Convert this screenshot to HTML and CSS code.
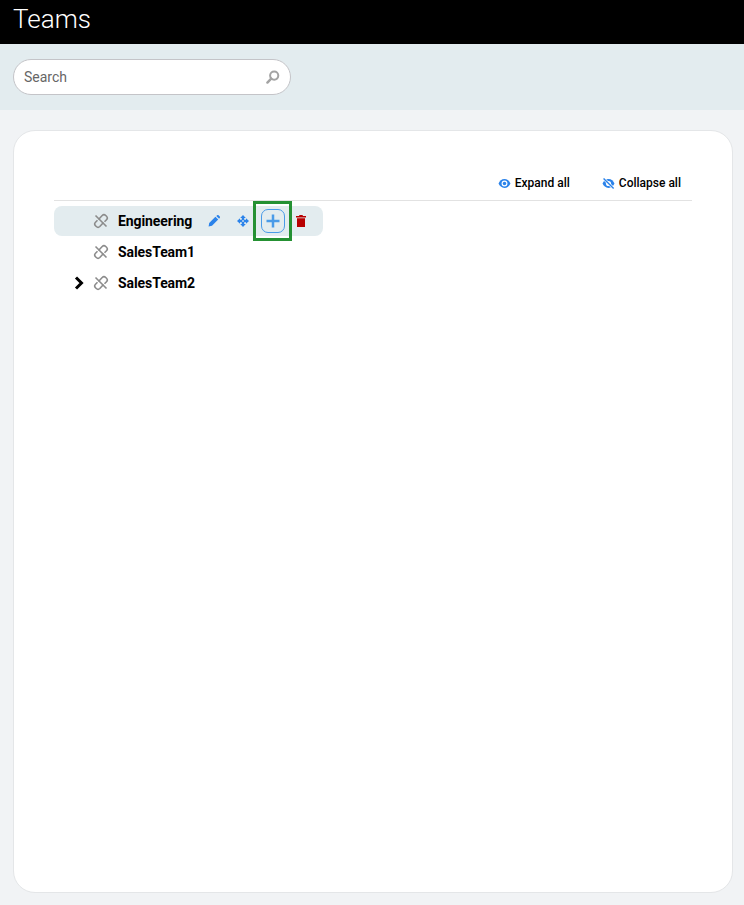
FILE: index.html
```html
<!DOCTYPE html>
<html lang="en">
  <head>
    <meta charset="UTF-8" />
    <meta name="viewport" content="width=device-width, initial-scale=1.0" />
    <title>Teams</title>
    <link rel="stylesheet" href="styles.css">
  </head>
  <body>
    <header class="page-header">
      <h1>Teams</h1>
    </header>

    <!-- Search band -->
    <div class="search-band">
      <div class="search-box">
        <input type="text" placeholder="Search" />
        <svg class="search-icon" viewBox="0 0 14 14" width="14" height="14">
          <circle cx="8.2" cy="5.6" r="4.1" fill="none" stroke="#a3a3a3" stroke-width="2" />
          <path d="M5.2 8.6 1.4 12.6" fill="none" stroke="#a3a3a3" stroke-width="2.4" stroke-linecap="round" />
        </svg>
      </div>
    </div>

    <main class="card">
      <div class="tree-tools">
        <a class="tool-link">
          <svg viewBox="0 0 14 12" width="13" height="11">
            <path d="M7 1.200C3.900 1.200 1.600 3.400.5 6c1.100 2.600 3.400 4.800 6.500 4.800s5.400-2.200 6.500-4.800C12.400 3.400 10.100 1.200 7 1.200z" fill="#2b83ea" />
            <circle cx="7" cy="6" r="3.200" fill="#fff" />
            <circle cx="7" cy="6" r="1.900" fill="#2b83ea" />
          </svg>
          Expand all
        </a>
        <a class="tool-link">
          <svg viewBox="0 0 14 12" width="13" height="11">
            <path d="M7 1.200C3.900 1.200 1.600 3.400.5 6c1.100 2.600 3.400 4.800 6.500 4.800s5.400-2.200 6.500-4.800C12.400 3.400 10.100 1.200 7 1.200z" fill="#2b83ea" />
            <circle cx="7" cy="6" r="2.800" fill="#fff" />
            <path d="M1.600.6l11 10.800" stroke="#fff" stroke-width="3" />
            <path d="M1.600.6l11 10.800" stroke="#2b83ea" stroke-width="1.500" />
          </svg>
          Collapse all
        </a>
      </div>

      <ul class="tree">
        <li class="tree-row selected">
          <span class="caret"></span>
          <svg class="unlink" viewBox="0 0 16 16" width="16" height="16">
            <path d="M5.500 6.500 9.200 2.500a2.500 2.500 0 0 1 3.500 0l.8.8a2.500 2.500 0 0 1 0 3.500L11.500 8.800M10.500 9.500 6.800 13.500a2.500 2.500 0 0 1-3.500 0l-.8-.8a2.500 2.500 0 0 1 0-3.500L4.500 7.200" fill="none" stroke="#8c8c8c" stroke-width="1.600" />
            <path d="M2.500 2.500 13.500 13.500" stroke="#8c8c8c" stroke-width="1.600" />
          </svg>
          <span class="team-name">Engineering</span>
          <div class="row-actions">
            <svg class="edit-icon" viewBox="0 0 12 12" width="12" height="12">
              <path d="M.6 11.400 1.200 8 7.400 1.800 10.200 4.600 4 10.800zM8.300.9 9.200.2a1 1 0 0 1 1.300 0L11.800 1.500a1 1 0 0 1 0 1.300L11.100 3.700z" fill="#2b83ea" />
            </svg>
            <svg class="move-icon" viewBox="0 0 12 12" width="12" height="12">
              <path fill-rule="evenodd" d="M6 0 8.800 3H7.200V4.800H9V3.200L12 6 9 8.800V7.200H7.200V9H8.800L6 12 3.200 9H4.800V7.200H3V8.800L0 6 3 3.200V4.800H4.800V3H3.200zM5.200 5.200V6.800H6.800V5.200z" fill="#2b83ea" />
            </svg>
            <span class="add-focus">
              <button class="add-button">
                <svg viewBox="0 0 14 14" width="14" height="14">
                  <path d="M7 .5V13.500M.5 7H13.500" stroke="#4a9be8" stroke-width="2.500" />
                </svg>
              </button>
            </span>
            <svg class="trash-icon" viewBox="0 0 10 12" width="10" height="12">
              <path d="M3.500 0h3l.5 1H10v1.400H0V1h3zM1 3.300h8V12H1z" fill="#b80000" />
            </svg>
          </div>
        </li>
        <li class="tree-row">
          <span class="caret"></span>
          <svg class="unlink" viewBox="0 0 16 16" width="16" height="16">
            <path d="M5.500 6.500 9.200 2.500a2.500 2.500 0 0 1 3.500 0l.8.8a2.500 2.500 0 0 1 0 3.500L11.500 8.800M10.500 9.500 6.800 13.500a2.500 2.500 0 0 1-3.500 0l-.8-.8a2.500 2.500 0 0 1 0-3.500L4.500 7.200" fill="none" stroke="#8c8c8c" stroke-width="1.600" />
            <path d="M2.500 2.500 13.500 13.500" stroke="#8c8c8c" stroke-width="1.600" />
          </svg>
          <span class="team-name">SalesTeam1</span>
        </li>
        <li class="tree-row">
          <span class="caret">
            <svg viewBox="0 0 10 14" width="10" height="14">
              <path d="M2 1.500 7.500 7 2 12.500" fill="none" stroke="#000" stroke-width="3" />
            </svg>
          </span>
          <svg class="unlink" viewBox="0 0 16 16" width="16" height="16">
            <path d="M5.500 6.500 9.200 2.500a2.500 2.500 0 0 1 3.500 0l.8.8a2.500 2.500 0 0 1 0 3.500L11.500 8.800M10.500 9.500 6.800 13.500a2.500 2.500 0 0 1-3.500 0l-.8-.8a2.500 2.500 0 0 1 0-3.500L4.500 7.200" fill="none" stroke="#8c8c8c" stroke-width="1.600" />
            <path d="M2.500 2.500 13.500 13.500" stroke="#8c8c8c" stroke-width="1.600" />
          </svg>
          <span class="team-name">SalesTeam2</span>
        </li>
      </ul>
    </main>
  </body>
</html>
```

FILE: styles.css
```css
body {
  margin: 0;
  height: 905px;
  overflow: hidden;
  background-color: #f1f3f5;
  font-family: Roboto, Arial, sans-serif;
}

.page-header {
  height: 44px;
  background-color: #000;
  padding-left: 13px;
}

.page-header h1 {
  margin: 0;
  color: #fff;
  font-size: 26px;
  font-weight: 300;
  line-height: 38px;
}

.search-band {
  height: 66px;
  box-sizing: border-box;
  padding: 15px 13px;
  background-color: #e3ecef;
}

.search-box {
  width: 278px;
  height: 36px;
  box-sizing: border-box;
  display: flex;
  align-items: center;
  padding: 0 10px;
  background-color: #fff;
  border: 1px solid #c4c4c8;
  border-radius: 18px;
}

.search-box input {
  flex: 1;
  min-width: 0;
  border: none;
  outline: none;
  padding: 0;
  font-family: inherit;
  font-size: 14px;
  color: #555;
}

.search-box input::placeholder {
  color: #666;
  opacity: 1;
}

.card {
  margin: 20px 11px 0 13px;
  height: 763px;
  box-sizing: border-box;
  padding: 40px 40px 0 40px;
  background-color: #fff;
  border: 1px solid #e4e6e8;
  border-radius: 22px;
}

.tree-tools {
  height: 29px;
  display: flex;
  justify-content: flex-end;
  align-items: flex-start;
  gap: 32px;
  padding-right: 11px;
  border-bottom: 1px solid #e2e2e2;
}

.tool-link {
  display: flex;
  align-items: center;
  gap: 4px;
  margin-top: 5px;
  color: #000;
  font-size: 12px;
  font-weight: 500;
  cursor: pointer;
}

.tree {
  list-style: none;
  margin: 5px 0 0;
  padding: 0;
}

.tree-row {
  width: 269px;
  height: 30px;
  margin-bottom: 1px;
  display: flex;
  align-items: center;
  border-radius: 8px;
}

.tree-row.selected {
  background-color: #e3ecef;
}

.caret {
  width: 39px;
  display: flex;
  justify-content: flex-end;
  padding-right: 9px;
  box-sizing: border-box;
}

.unlink {
  margin-right: 9px;
}

.team-name {
  font-size: 14px;
  font-weight: 700;
  color: #000;
  letter-spacing: -0.08px;
}

.row-actions {
  display: flex;
  align-items: center;
  margin-left: 16px;
}

.edit-icon {
  margin-right: 17px;
}

.move-icon {
  margin-right: 4px;
}

.add-focus {
  width: 39px;
  height: 40px;
  box-sizing: border-box;
  display: flex;
  align-items: center;
  justify-content: center;
  border: 3px solid #259133;
}

.add-button {
  width: 24px;
  height: 24px;
  padding: 0;
  display: flex;
  align-items: center;
  justify-content: center;
  background: transparent;
  border: 1px solid #4a9be8;
  border-radius: 7px;
  cursor: pointer;
}

.trash-icon {
  margin-left: 4px;
}
```
